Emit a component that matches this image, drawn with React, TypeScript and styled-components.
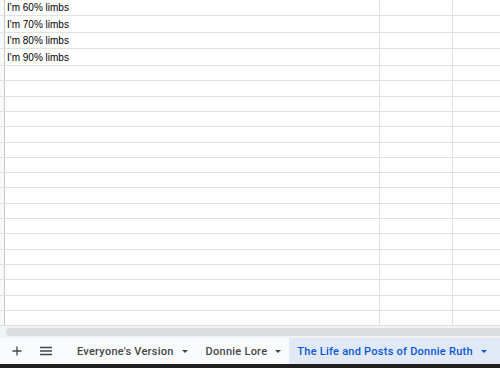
import React from 'react'
import { styled, createGlobalStyle } from 'styled-components'

const GlobalStyle = createGlobalStyle`
  html, body {
    margin: 0;
    padding: 0;
    background: #ffffff;
    overflow: hidden;
  }
  * { box-sizing: border-box; }
`

const texts = ["I'm 60% limbs", "I'm 70% limbs", "I'm 80% limbs", "I'm 90% limbs"]
const topHeights = [16, 17, 16, 17]

// remaining rows are ~15.3px apart, so round the line positions
const buildHeights = () => {
    const out: number[] = [...topHeights]
    let prev = 66
    for (let k = 1; k <= 18; k++) {
        const next = Math.round(65 + k * 15.3) + 1
        out.push(next - prev)
        prev = next
    }
    return out
}

const App: React.FC = () => {
    const heights = buildHeights()
    return (
        <Page>
            <GlobalStyle />
            <Sheet>
                {heights.map((h, i) => (
                    <Row key={i} h={h}>
                        <RowHead />
                        <Cell w={375}>{texts[i] || ''}</Cell>
                        <Cell w={73} />
                        <Cell w={46} last />
                    </Row>
                ))}
            </Sheet>
            <ScrollTrack>
                <Thumb />
            </ScrollTrack>
            <TabBar>
                <IconBtn>
                    <svg width="10" height="10" viewBox="0 0 10 10">
                        <path d="M5 0.5v9M0.5 5h9" stroke="#444746" strokeWidth="1.3" />
                    </svg>
                </IconBtn>
                <IconBtn>
                    <svg width="12" height="10" viewBox="0 0 12 10">
                        <path d="M0 1.5h12M0 5h12M0 8.5h12" stroke="#444746" strokeWidth="1.4" />
                    </svg>
                </IconBtn>
                <Tab first>
                    Everyone's Version
                    <Caret />
                </Tab>
                <Tab>
                    Donnie Lore
                    <Caret />
                </Tab>
                <Tab active>
                    The Life and Posts of Donnie Ruth
                    <Caret active />
                </Tab>
            </TabBar>
            <BottomStrip />
        </Page>
    )
}

export default App

const Page = styled.div`
width: 500px;
height: 368px;
display: flex;
flex-direction: column;
overflow: hidden;
background: #ffffff;
`

const Sheet = styled.div`
height: 326px;
overflow: hidden;
display: flex;
flex-direction: column;
`

const Row = styled.div<{ h: number }>`
display: flex;
flex: none;
height: ${({ h }) => h}px;
border-bottom: 1px solid #e1e1e1;
`

const RowHead = styled.div`
width: 5px;
flex: none;
background: #f8f9fa;
border-right: 1px solid #c7c7c7;
`

const Cell = styled.div<{ w: number, last?: boolean }>`
width: ${({ w }) => w}px;
flex: none;
border-right: ${({ last }) => last ? 'none' : '1px solid #e1e1e1'};
font-family: Arial, "Liberation Sans", sans-serif;
font-size: 10px;
color: #000000;
padding-left: 2px;
display: flex;
align-items: center;
white-space: nowrap;
`

const ScrollTrack = styled.div`
height: 12px;
flex: none;
background: #f1f3f4;
padding: 2px 0 2px 6px;
display: flex;
`

const Thumb = styled.div`
flex: 1;
background: #dadce0;
border-radius: 4px 0 0 4px;
`

const TabBar = styled.div`
height: 26px;
flex: none;
background: #f9fbfd;
display: flex;
align-items: stretch;
padding-left: 2px;
`

const IconBtn = styled.div`
width: 29px;
display: flex;
align-items: center;
justify-content: center;
`

const Tab = styled.div<{ active?: boolean, first?: boolean }>`
display: flex;
align-items: center;
padding: 0 8px 0 ${({ active }) => active ? '8px' : '10px'};
margin-left: ${({ first }) => first ? '7px' : '0'};
flex: ${({ active }) => active ? '1' : 'none'};
background: ${({ active }) => active ? '#e1e9f7' : 'transparent'};
color: ${({ active }) => active ? '#0b57d0' : '#444746'};
font-family: Roboto, "Open Sans", sans-serif;
font-weight: 500;
font-size: 11px;
letter-spacing: 0.25px;
white-space: nowrap;
`

const Caret = styled.span<{ active?: boolean }>`
width: 0;
height: 0;
margin-left: 8px;
border-left: 3.5px solid transparent;
border-right: 3.5px solid transparent;
border-top: 3.5px solid ${({ active }) => active ? '#0b57d0' : '#444746'};
`

const BottomStrip = styled.div`
height: 4px;
flex: none;
background: #1f1f1f;
`
